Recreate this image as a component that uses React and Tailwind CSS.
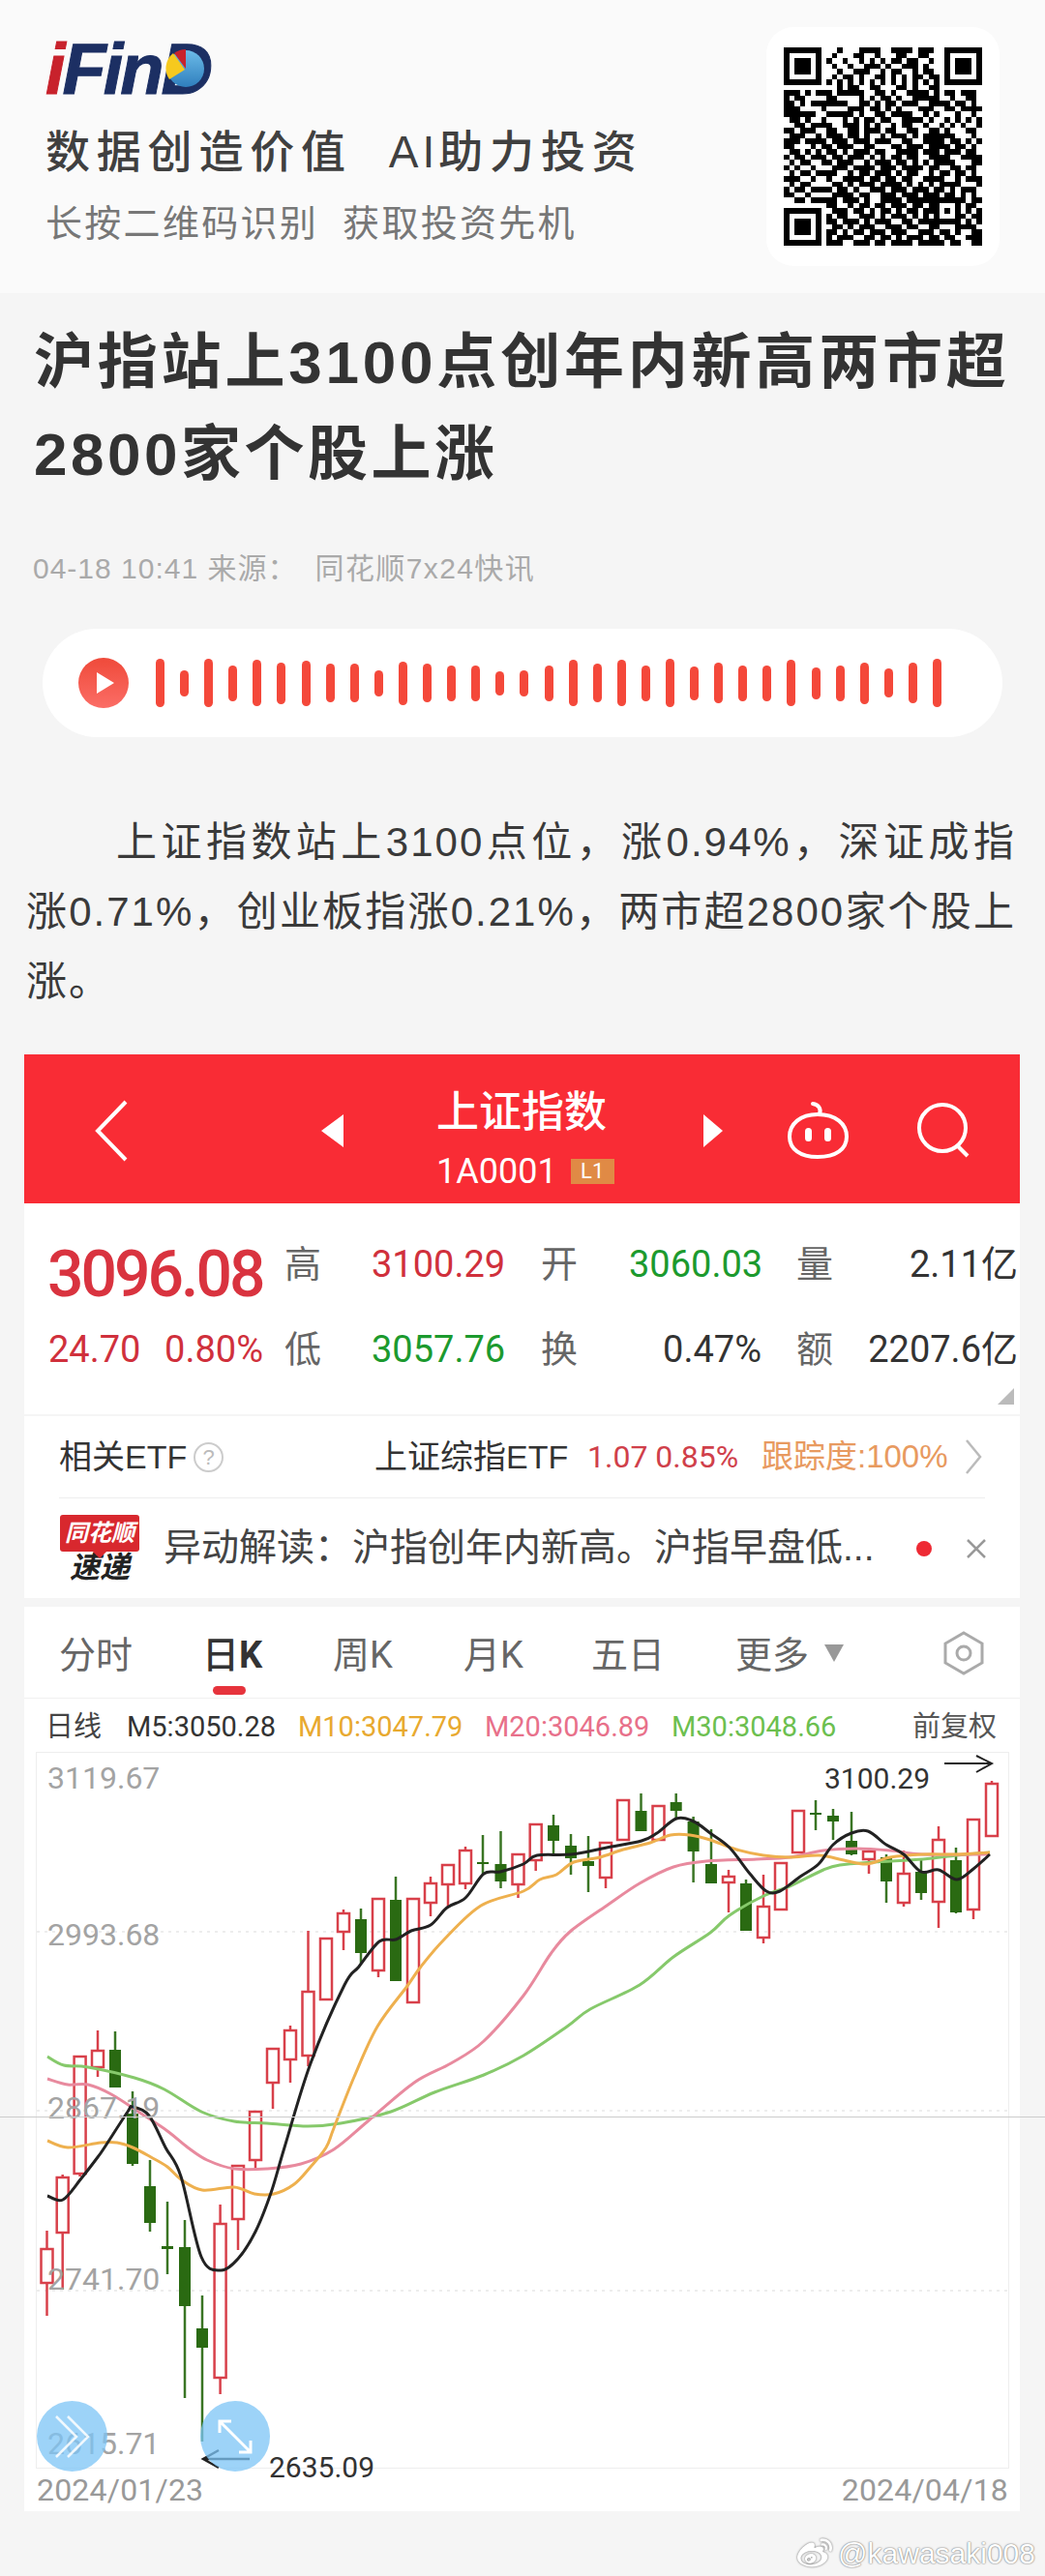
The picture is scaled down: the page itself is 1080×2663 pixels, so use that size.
import React from 'react';
import { FaWeibo } from 'react-icons/fa';

const qrRows = [
  '1111111 0 001000111100111101110 0 1111111',
  '1000001 0 010001100100011001100 0 1000001',
  '1011101 0 100100101010110110010 0 1011101',
  '1011101 0 010010011101001110100 0 1011101',
  '1011101 0 001001110010110010110 0 1011101',
  '1000001 0 010110100110101011011 0 1000001',
  '1111111 0 101010101010101010101 0 1111111',
  '0000000 0 001011001100011010011 0 0000000',
  '1110101 1 101111100110100111101 0 1101110',
  '1011000 0 110000101011010011111 0 0100110',
  '1101011 1 111100110101101110011 1 1011010',
  '1110000 1 000011101101010001110 0 1101111',
  '1111110 0 111110100110111100101 0 0010010',
  '0110100 1 000101011011001111010 0 1010101',
  '0011011 1 100111010100101100100 1 0101001',
  '1101110 0 110011011101100110011 0 1000110',
  '0111001 0 111011010010111010111 1 1100010',
  '1110111 1 011101110111001100111 1 0110101',
  '1100010 1 101110011000110111011 1 1011010',
  '0110101 0 110101110110011110111 0 1110110',
  '1011011 1 011011101010110110011 1 1001111',
  '0101100 1 101110010111011010101 1 1100011',
  '1010010 0 011101111011101111011 0 0110110',
  '0101101 1 110010110111010110010 1 1011010',
  '1110010 0 100111101101101100111 1 0010111',
  '0101100 0 011010111011110101010 1 1110001',
  '1011011 1 101101001110111011101 1 0101110',
  '1100100 0 011110110011101110111 0 1101010',
  '0011011 1 110111010011110111111 1 1111011',
  '0000000 0 110010110110111011011 0 0010110',
  '1111111 0 011101101011010110111 0 1010101',
  '1000001 0 101100111010111010101 0 0011011',
  '1011101 0 110111010111001101111 1 1110101',
  '1011101 0 011010111001110110011 0 0011110',
  '1011101 0 110101101110111001110 1 1010011',
  '1000001 0 101110011011010111011 0 1100111',
  '1111111 0 111001110110111101111 1 0110011',
];

const qrPath = qrRows
  .map((row, y) =>
    row
      .replaceAll(' ', '')
      .split('')
      .map((c, x) => (c === '1' ? `M${x} ${y}h1v1h-1z` : ''))
      .join(''),
  )
  .join('');

const barHeights = [50, 27, 50, 37, 48, 43, 47, 40, 40, 27, 45, 40, 37, 37, 25, 27, 37, 48, 40, 48, 37, 50, 35, 42, 37, 37, 48, 33, 37, 43, 30, 42, 50];

// x, body top, body bottom, wick top, wick bottom, up
const candles = [
  [47.5, 2325, 2360, 2306, 2394, 1],
  [63.7, 2251, 2308, 2248, 2367, 1],
  [81.6, 2126, 2247, 2126, 2250, 1],
  [100, 2120, 2137, 2099, 2147, 1],
  [118, 2119, 2158, 2100, 2158, 0],
  [136, 2185, 2237, 2162, 2239, 0],
  [154, 2260, 2298, 2233, 2307, 0],
  [172, 2322, 2325, 2276, 2351, 0],
  [190, 2323, 2384, 2295, 2479, 0],
  [208, 2407, 2427, 2373, 2524, 0],
  [226.6, 2299, 2458, 2279, 2475, 1],
  [245, 2239, 2294, 2239, 2326, 1],
  [263, 2183, 2233, 2183, 2243, 1],
  [281, 2118, 2153, 2118, 2180, 1],
  [299, 2099, 2129, 2094, 2153, 1],
  [317.5, 2059, 2125, 1996, 2136, 1],
  [336, 2004, 2067, 2004, 2067, 1],
  [354, 1978, 1997, 1974, 2016, 1],
  [372, 1984, 2019, 1973, 2030, 0],
  [390, 1963, 2037, 1963, 2044, 1],
  [408, 1964, 2048, 1940, 2048, 0],
  [426, 1963, 2070, 1963, 2070, 1],
  [444, 1947, 1967, 1940, 1981, 1],
  [462, 1928, 1948, 1928, 1972, 1],
  [480, 1913, 1947, 1909, 1953, 1],
  [498, 1925, 1927, 1897, 1937, 0],
  [516.5, 1927, 1945, 1893, 1952, 0],
  [534.5, 1917, 1948, 1917, 1962, 1],
  [552.7, 1886, 1923, 1886, 1934, 1],
  [571, 1887, 1903, 1876, 1919, 0],
  [589, 1908, 1921, 1896, 1938, 0],
  [607, 1924, 1929, 1898, 1956, 0],
  [625, 1905, 1941, 1905, 1952, 1],
  [643, 1861, 1902, 1861, 1902, 1],
  [661.5, 1872, 1893, 1854, 1893, 0],
  [679.5, 1867, 1902, 1867, 1902, 1],
  [697.7, 1863, 1872, 1854, 1880, 0],
  [715.6, 1883, 1914, 1878, 1946, 0],
  [734, 1927, 1947, 1891, 1947, 0],
  [752, 1940, 1946, 1933, 1977, 1],
  [770, 1947, 1996, 1943, 1996, 0],
  [788, 1971, 2003, 1938, 2009, 1],
  [806, 1926, 1974, 1926, 1974, 1],
  [824, 1872, 1915, 1872, 1915, 1],
  [842, 1874, 1876, 1861, 1892, 0],
  [860, 1877, 1883, 1870, 1902, 0],
  [879, 1903, 1917, 1873, 1918, 0],
  [897, 1914, 1922, 1912, 1937, 1],
  [915, 1920, 1945, 1917, 1967, 0],
  [933, 1937, 1967, 1913, 1971, 1],
  [951, 1935, 1957, 1922, 1964, 0],
  [969, 1902, 1966, 1888, 1993, 1],
  [987, 1923, 1977, 1910, 1978, 0],
  [1005, 1881, 1974, 1881, 1984, 1],
  [1024, 1844, 1898, 1841, 1898, 1],
];

const m5 = [[48, 2270], [64, 2274], [83, 2252], [100, 2230], [107, 2220], [131, 2183], [136, 2178], [153, 2187], [170, 2220], [186, 2250], [207, 2333], [227, 2347], [245, 2335], [263, 2307], [279, 2267], [293, 2220], [320, 2133], [355, 2052], [370, 2033], [391, 2007], [408, 2005], [424, 1996], [444, 1990], [461, 1972], [480, 1962], [499, 1937], [516, 1935], [540, 1927], [554, 1918], [589, 1917], [626, 1910], [662, 1903], [678, 1895], [698, 1880], [716, 1883], [733, 1895], [753, 1910], [774, 1937], [791, 1955], [805, 1955], [826, 1940], [845, 1927], [860, 1907], [879, 1895], [896, 1893], [915, 1907], [933, 1917], [951, 1935], [969, 1933], [988, 1943], [1005, 1932], [1022, 1917]];
const m10 = [[48, 2213], [69, 2220], [103, 2215], [120, 2215], [136, 2220], [155, 2230], [172, 2240], [186, 2253], [208, 2264], [241, 2261], [262, 2268], [282, 2268], [303, 2258], [320, 2240], [336, 2220], [344, 2200], [365, 2147], [389, 2095], [420, 2053], [434, 2033], [458, 2005], [496, 1970], [540, 1955], [557, 1943], [574, 1938], [592, 1925], [619, 1920], [643, 1912], [671, 1905], [692, 1897], [712, 1897], [733, 1902], [760, 1912], [788, 1918], [815, 1920], [846, 1918], [871, 1923], [895, 1927], [919, 1920], [953, 1917], [988, 1917], [1022, 1915]];
const m20 = [[48, 2149], [69, 2155], [90, 2155], [114, 2165], [145, 2185], [172, 2203], [193, 2220], [213, 2233], [241, 2242], [275, 2242], [310, 2237], [344, 2222], [379, 2193], [427, 2153], [465, 2133], [499, 2110], [540, 2063], [568, 2020], [588, 1997], [626, 1970], [660, 1947], [695, 1930], [729, 1924], [781, 1922], [815, 1920], [850, 1913], [884, 1911], [919, 1913], [953, 1917], [1022, 1917]];
const m30 = [[48, 2126], [65, 2135], [90, 2137], [138, 2148], [169, 2160], [207, 2183], [241, 2193], [275, 2195], [317, 2198], [351, 2195], [403, 2183], [448, 2163], [499, 2145], [540, 2125], [585, 2095], [609, 2077], [660, 2052], [695, 2023], [733, 1998], [753, 1980], [788, 1960], [815, 1950], [850, 1933], [867, 1928], [902, 1925], [953, 1922], [988, 1918], [1022, 1915]];

// smooth the moving average points a little
const smooth = (pts) => {
  let d = `M${pts[0][0]} ${pts[0][1]}`;
  for (let i = 0; i < pts.length - 1; i++) {
    const p0 = pts[i - 1] || pts[i];
    const p1 = pts[i];
    const p2 = pts[i + 1];
    const p3 = pts[i + 2] || p2;
    const c1x = p1[0] + (p2[0] - p0[0]) / 6;
    const c1y = p1[1] + (p2[1] - p0[1]) / 6;
    const c2x = p2[0] - (p3[0] - p1[0]) / 6;
    const c2y = p2[1] - (p3[1] - p1[1]) / 6;
    d += `C${c1x} ${c1y} ${c2x} ${c2y} ${p2[0]} ${p2[1]}`;
  }
  return d;
};

const Logo = () => (
  <div className="relative h-[53px] w-[175px] text-[74px] leading-[53px] font-bold italic tracking-[-3px] text-[#1c2f63] [font-family:'Liberation_Sans',sans-serif] [-webkit-text-stroke:1px_#1c2f63]">
    <span className="text-[#c8222c] [-webkit-text-stroke:1px_#c8222c]">i</span>Fin<span>D</span>
    <svg className="absolute left-[122px] top-[3px]" width="46" height="46" viewBox="0 0 46 46">
      <defs>
        <linearGradient id="pieBlue" x1="0" y1="0" x2="0" y2="1">
          <stop offset="0" stopColor="#6cbbe8" />
          <stop offset="1" stopColor="#2f7fbd" />
        </linearGradient>
      </defs>
      <circle cx="23" cy="23" r="19" fill="url(#pieBlue)" />
      <path d="M23 23 L23 3 A20 20 0 0 0 11 7 Z" fill="#c8222c" />
      <path d="M22 24 L10 7 A20 20 0 0 0 6 34 Z" fill="#f6c91e" />
    </svg>
  </div>
);

const AudioPill = () => (
  <div className="mt-[42px] ml-[44px] flex h-[112px] w-[992px] items-center rounded-full bg-white pl-[37px]">
    <svg width="52" height="52" viewBox="0 0 52 52">
      <defs>
        <linearGradient id="playRed" x1="0" y1="0" x2="0" y2="1">
          <stop offset="0" stopColor="#ef4a3a" />
          <stop offset="1" stopColor="#fb6d66" />
        </linearGradient>
      </defs>
      <circle cx="26" cy="26" r="26" fill="url(#playRed)" />
      <path d="M19 15 L37 26 L19 37 Z" fill="white" />
    </svg>
    <div className="ml-[28px] flex items-center gap-[16.1px]">
      {barHeights.map((h, i) => (
        <div key={i} className="w-[9px] rounded-full bg-[#f4483a]" style={{ height: h }} />
      ))}
    </div>
  </div>
);

const RedHeader = () => (
  <div className="flex h-[154px] items-center bg-[#f92c35] text-white">
    <svg className="ml-[73px] mt-[4px]" width="35" height="64" viewBox="0 0 35 64" fill="none" stroke="white" strokeWidth="4">
      <path d="M32 2 L3 32 L32 62" />
    </svg>
    <div className="ml-[199px] mt-[4px] h-0 w-0 border-y-[17px] border-r-[23px] border-y-transparent border-r-white" />
    <div className="mt-[17px] ml-[96px] flex w-[276px] flex-col">
      <div className="h-[56px] text-[44px] leading-[56px] font-medium">上证指数</div>
      <div className="mt-[15px] flex items-center">
        <span className="text-[36px] leading-[36px] [font-family:Roboto,sans-serif]">1A0001</span>
        <span className="ml-[14px] flex h-[26px] w-[45px] items-center justify-center bg-[#e08a45] text-[22px] leading-[26px] [font-family:Roboto,sans-serif]">L1</span>
      </div>
    </div>
    <div className="mt-[4px] h-0 w-0 border-y-[17px] border-l-[20px] border-y-transparent border-l-white" />
    <svg className="ml-[66px] mt-[2px]" width="65" height="60" viewBox="0 0 65 60" fill="none" stroke="white" strokeWidth="4">
      <path d="M32 14 C14 14 3 24 3 37 C3 50 14 58 32 58 C51 58 62 50 62 37 C62 24 51 14 32 14 Z" />
      <path d="M34 14 C36 8 33 4 27 3" strokeLinecap="round" />
      <rect x="21" y="30" width="3" height="10" rx="1.5" fill="white" />
      <rect x="41" y="30" width="3" height="10" rx="1.5" fill="white" />
    </svg>
    <svg className="ml-[69px] mt-[2px]" width="56" height="58" viewBox="0 0 56 58" fill="none" stroke="white" strokeWidth="4">
      <circle cx="27" cy="27" r="24" />
      <path d="M42 45 L53 56" />
    </svg>
  </div>
);

const Stats = () => (
  <div className="relative h-[218px] pt-[19px] pl-[25px]">
    <div className="grid grid-cols-[245px_89px_175px_92px_173px_40px_188px] grid-rows-[88px_88px] items-center text-[38px] text-[#666] [font-family:'Roboto','Noto_Sans_CJK_SC',sans-serif]">
      <div className="-ml-[1px] pt-[22px] text-[66px] leading-[66px] font-medium tracking-[-3px] text-[#d9333f]">3096.08</div>
      <div className="-ml-[1px]">高</div>
      <div className="text-[#d0303c]">3100.29</div>
      <div>开</div>
      <div className="-ml-[1px] text-[#1c9a2e]">3060.03</div>
      <div className="-ml-[1px]">量</div>
      <div className="text-right text-[#333]">2.11亿</div>
      <div className="flex w-[222px] justify-between text-[#d0303c]">
        <span>24.70</span>
        <span>0.80%</span>
      </div>
      <div className="-ml-[1px]">低</div>
      <div className="text-[#1c9a2e]">3057.76</div>
      <div>换</div>
      <div className="pr-[37px] text-right text-[#333]">0.47%</div>
      <div className="-ml-[1px]">额</div>
      <div className="text-right text-[#333]">2207.6亿</div>
    </div>
    <div className="absolute right-[6px] bottom-[10px] h-0 w-0 border-b-[17px] border-l-[17px] border-b-[#bbb] border-l-transparent" />
  </div>
);

const EtfRow = () => (
  <div className="mx-[36px] flex h-[85px] items-center border-b border-[#eee] text-[34px] text-[#333] [font-family:'Liberation_Sans','Noto_Sans_CJK_SC',sans-serif]">
    <span className="w-[125px] whitespace-nowrap">相关ETF</span>
    <span className="ml-[14px] flex h-[31px] w-[31px] items-center justify-center rounded-full border-2 border-[#ccc] text-[22px] text-[#bbb]">?</span>
    <span className="ml-[156px] w-[193px] whitespace-nowrap">上证综指ETF</span>
    <span className="ml-[27px] w-[180px] whitespace-nowrap text-[32px] text-[#d0404a] [font-family:Roboto,sans-serif]">1.07 0.85%</span>
    <span className="w-[210px] whitespace-nowrap text-[33px] text-[#e89a60]">跟踪度:100%</span>
    <svg width="18" height="38" viewBox="0 0 18 38" fill="none" stroke="#bbb" strokeWidth="2.5">
      <path d="M2 2 L16 19 L2 36" />
    </svg>
  </div>
);

const NewsRow = () => (
  <div className="flex h-[103px] items-center pl-[36px] text-[39px] text-[#444]">
    <div className="flex w-[84px] flex-col items-center">
      <div className="relative flex h-[38px] w-[82px] items-center justify-center rounded-[3px] bg-[#d8282e] text-[24px] leading-[38px] font-bold whitespace-nowrap text-white italic">
        同花顺
        <div className="absolute -bottom-[5px] left-[36px] h-[10px] w-[10px] rotate-45 bg-[#d8282e]" />
      </div>
      <div className="mt-[2px] text-[31px] leading-[30px] font-bold whitespace-nowrap text-[#222] italic">速递</div>
    </div>
    <div className="ml-[24px] w-[752px] whitespace-nowrap">{'异动解读\uFF1A沪指创年内新高。沪指早盘低...'}</div>
    <div className="ml-[26px] h-[16px] w-[16px] rounded-full bg-[#ee2a34]" />
    <svg className="ml-[35px]" width="22" height="22" viewBox="0 0 22 22" stroke="#999" strokeWidth="2.5">
      <path d="M2 2 L20 20 M20 2 L2 20" />
    </svg>
  </div>
);

const Tabs = () => (
  <div className="flex h-[95px] items-center border-b border-[#f0f0f0] pt-[7px] pl-[36px] text-[38px] text-[#666]">
    <span className="w-[148px]">分时</span>
    <span className="relative w-[135px] font-medium text-[#333]">
      日<span className="font-bold [font-family:Roboto,sans-serif]">K</span>
      <div className="absolute left-[11px] top-[60px] h-[9px] w-[34px] rounded-full bg-[#e6333c]" />
    </span>
    <span className="w-[135px]">周<span className="[font-family:Roboto,sans-serif]">K</span></span>
    <span className="w-[132px]">月<span className="[font-family:Roboto,sans-serif]">K</span></span>
    <span className="w-[149px]">五日</span>
    <span className="w-[92px]">更多</span>
    <div className="mt-[-6px] h-0 w-0 border-x-[10px] border-t-[18px] border-x-transparent border-t-[#999]" />
    <svg className="mt-[-6px] ml-[102px]" width="44" height="46" viewBox="0 0 44 46" fill="none" stroke="#aaa" strokeWidth="3">
      <path d="M22 2 L41 13 L41 33 L22 44 L3 33 L3 13 Z" />
      <circle cx="22" cy="23" r="7" />
    </svg>
  </div>
);

const MaRow = () => (
  <div className="flex h-[55px] items-center pt-[5px] pl-[22px] text-[29px] [font-family:Roboto,'Noto_Sans_CJK_SC',sans-serif]">
    <span className="w-[84px] text-[#444]">日线</span>
    <span className="w-[177px] text-[#333]">M5:3050.28</span>
    <span className="w-[193px] text-[#e8a92f]">M10:3047.79</span>
    <span className="w-[193px] text-[#e8708a]">M20:3046.89</span>
    <span className="w-[249px] text-[#6cbf4f]">M30:3048.66</span>
    <span className="text-[#555]">前复权</span>
  </div>
);

const Chart = () => (
  <div className="relative ml-[12px] h-[741px] w-[1006px] border border-[#eee] [font-family:Roboto,sans-serif]">
    <svg className="absolute inset-0" width="1006" height="741" viewBox="37 1812 1006 741" fill="none">
      {[1997, 2182, 2368].map((y) => (
        <line key={y} x1="37" x2="1043" y1={y} y2={y} stroke="#e8e8e8" strokeWidth="1.5" strokeDasharray="3 5" />
      ))}
      {candles.map(([x, top, bottom, wt, wb, up]) =>
        up ? (
          <g key={x} stroke="#d8404a" strokeWidth="2.5">
            <line x1={x} x2={x} y1={wt} y2={top} />
            <line x1={x} x2={x} y1={bottom} y2={wb} />
            <rect x={x - 6} y={top} width="12" height={bottom - top} />
          </g>
        ) : (
          <g key={x}>
            <line x1={x} x2={x} y1={wt} y2={wb} stroke="#3a7524" strokeWidth="2.5" />
            <rect x={x - 6} y={top} width="12" height={Math.max(bottom - top, 2)} fill="#2a6a12" />
          </g>
        ),
      )}
      <path d={smooth(m30)} stroke="#86c96b" strokeWidth="3" />
      <path d={smooth(m20)} stroke="#e88a9e" strokeWidth="3" />
      <path d={smooth(m10)} stroke="#eeb04e" strokeWidth="3" />
      <path d={smooth(m5)} stroke="#222" strokeWidth="3" />
      <path d="M975 1823 H1023 M1008 1815 L1024 1823 L1008 1832" stroke="#222" strokeWidth="2" />
      <path d="M257 2542 H209 M225 2533 L209 2542 L225 2551" stroke="#222" strokeWidth="2.5" />
    </svg>
    <div className="absolute left-[11px] top-[11px] text-[32px] leading-[30px] text-[#a3a3a3]">3119.67</div>
    <div className="absolute left-[11px] top-[173px] text-[32px] leading-[30px] text-[#a3a3a3]">2993.68</div>
    <div className="absolute left-[11px] top-[352px] text-[32px] leading-[30px] text-[#a3a3a3]">2867.19</div>
    <div className="absolute left-[11px] top-[529px] text-[32px] leading-[30px] text-[#a3a3a3]">2741.70</div>
    <div className="absolute left-[11px] top-[699px] text-[32px] leading-[30px] text-[#a3a3a3]">2615.71</div>
    <div className="absolute left-[814px] top-[12px] text-[30px] leading-[30px] text-[#333]">3100.29</div>
    <div className="absolute left-[240px] top-[724px] text-[30px] leading-[30px] text-[#333]">2635.09</div>
    <div className="absolute left-0 top-[670px] flex h-[73px] w-[73px] items-center justify-center rounded-full bg-[#7cc4f5]/75">
      <svg width="40" height="46" viewBox="0 0 40 46" fill="none" stroke="white" strokeWidth="2.5" opacity="0.85">
        <path d="M3 2 L24 23 L3 44 M15 2 L36 23 L15 44" />
      </svg>
    </div>
    <div className="absolute left-[169px] top-[670px] flex h-[73px] w-[72px] items-center justify-center rounded-full bg-[#7cc4f5]/75">
      <svg width="38" height="38" viewBox="0 0 38 38" fill="none" stroke="white" strokeWidth="3">
        <path d="M3 3 L35 35 M3 15 V3 H15 M35 23 V35 H23" />
      </svg>
    </div>
  </div>
);

export default function App() {
  return (
    <div className="relative h-[2663px] w-[1080px] overflow-hidden bg-[#f5f5f5] [font-family:'Liberation_Sans','Noto_Sans_CJK_SC',sans-serif]">
      <header className="flex h-[303px] justify-between bg-[#fafafa] pr-[47px] pl-[47px]">
        <div className="pt-[45px]">
          <Logo />
          <div className="mt-[32px] flex h-[54px] items-center text-[46px] leading-[54px] font-medium tracking-[6.8px] whitespace-nowrap text-[#404040]">
            数据创造价值<span className="ml-[38px] tracking-[4px]">AI</span>助力投资
          </div>
          <div className="mt-[24px] text-[38px] leading-[46px] tracking-[2.3px] whitespace-nowrap text-[#777]">
            长按二维码识别<span className="ml-[25px]">获取投资先机</span>
          </div>
        </div>
        <div className="mt-[28px] flex h-[247px] w-[241px] items-center justify-center rounded-[28px] bg-white">
          <svg width="205" height="207" viewBox="0 0 37 37" shapeRendering="crispEdges">
            <path d={qrPath} fill="#000" />
          </svg>
        </div>
      </header>

      <h1 className="mt-[24px] pl-[35px] text-[62px] leading-[95px] font-bold tracking-[3.5px] text-[#333]">
        <div className="tracking-[3.8px] whitespace-nowrap">沪指站上3100点创年内新高两市超</div>
        <div>2800家个股上涨</div>
      </h1>

      <div className="mt-[51px] pl-[34px] text-[30px] leading-[40px] tracking-[1px] whitespace-nowrap text-[#aaa]">
        {'04-18 10:41 来源\uFF1A'}<span className="ml-[18px] tracking-[1.4px]">同花顺7x24快讯</span>
      </div>

      <AudioPill />

      <div className="mt-[73px] pl-[27px] text-[42px] leading-[72px] tracking-[2px] text-[#3a3a3a]">
        <div className="ml-[93px] w-[930px] text-justify [text-align-last:justify]">{'上证指数站上3100点位\uFF0C涨0.94%\uFF0C深证成指'}</div>
        <div className="w-[1023px] text-justify [text-align-last:justify]">{'涨0.71%\uFF0C创业板指涨0.21%\uFF0C两市超2800家个股上'}</div>
        <div>涨。</div>
      </div>

      <div className="mt-[39px] ml-[25px] h-[1506px] w-[1029px] bg-white">
        <RedHeader />
        <Stats />
        <div className="h-[2px] bg-[#f5f5f5]" />
        <EtfRow />
        <NewsRow />
        <div className="h-[9px] bg-[#f5f5f5]" />
        <Tabs />
        <MaRow />
        <Chart />
        <div className="flex h-[43px] items-center justify-between pr-[12px] pl-[13px] text-[32px] tracking-[0.2px] text-[#999] [font-family:Roboto,sans-serif]">
          <span>2024/01/23</span>
          <span>2024/04/18</span>
        </div>
      </div>

      <div className="absolute top-[2188px] left-0 h-px w-full bg-[#ccc]" />

      <div className="absolute top-[2622px] right-[10px] flex items-center text-[30px] leading-[34px] text-white [text-shadow:0_0_2px_#777,0_0_1px_#777]">
        <FaWeibo className="mr-[6px] text-[36px] text-white [filter:drop-shadow(0_0_1px_#666)]" />
        @kawasaki008
      </div>
    </div>
  );
}
